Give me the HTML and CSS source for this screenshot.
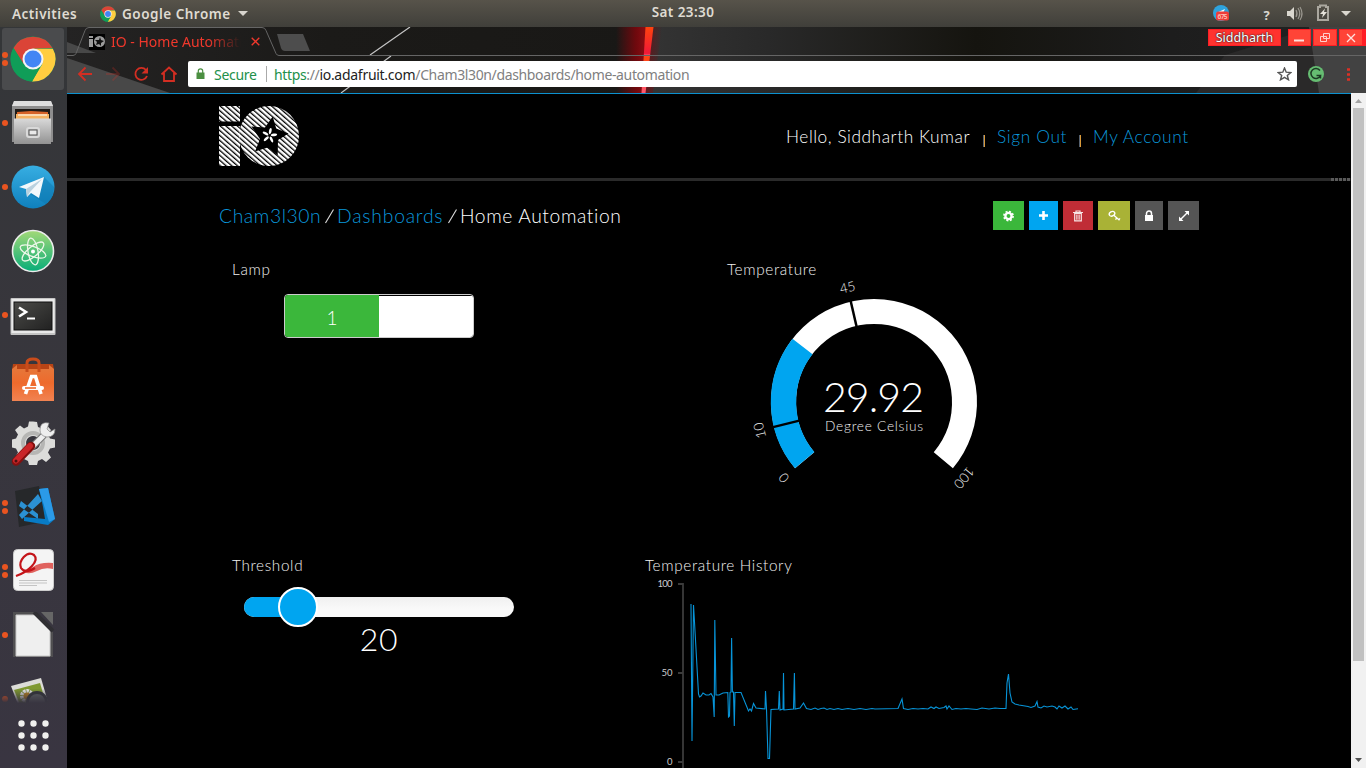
FILE: index.html
```html
<!DOCTYPE html>
<html lang="en">
<head>
<meta charset="utf-8">
<title>IO - Home Automation</title>
<link rel="stylesheet" href="styles.css">
</head>
<body>
<header class="topbar">
  <span class="activities">Activities</span>
  <svg class="mini" width="16" height="16" viewBox="0 0 46 46"><use href="#chrome"/></svg>
  <span class="appname">Google Chrome</span>
  <svg class="caret" width="10" height="5" viewBox="0 0 10 5"><path d="M0 0h10L5 5z" fill="#d8d5ce"/></svg>
  <span class="clock">Sat 23:30</span>
  <svg class="tray" width="150" height="27" viewBox="1210 0 150 27">
    <circle cx="1221" cy="13" r="8" fill="#2ea3dd"/><path d="M1216 13l9-4-2 4z" fill="#fff"/>
    <rect x="1216" y="11.500" width="13" height="9" rx="2" fill="#ef3c38"/>
    <text x="1217.500" y="18.500" font-size="6.500" textLength="10" fill="#ffc5bd">675</text>
    <text x="1263.500" y="19.500" font-size="13" font-weight="700" fill="#dad7cf">?</text>
    <path d="M1287 11h3l4-4v13l-4-4h-3z" fill="#dad7cf"/>
    <path d="M1296 10q2 3.500 0 7M1298 8q3.500 5.500 0 11M1300 7q4 6.500 0 13" fill="none" stroke="#9a978f" stroke-width="1.200"/>
    <path d="M1318 7h2v-1.500h6V7h2v13h-10z" fill="none" stroke="#aaa79f" stroke-width="2"/>
    <path d="M1325 8.500l-5 5.500h3l-1 4 5-6h-3z" fill="#e4e1d9"/>
    <path d="M1341 11h10l-5 5z" fill="#dad7cf"/>
  </svg>
</header>
<div class="desktop">
<nav class="dock">
  <div class="app on"><i class="dots two"></i>
    <svg width="46" height="46" viewBox="0 0 46 46"><g id="chrome"><circle cx="23" cy="23" r="22.500" fill="#109d58"/><path d="M3.500 12A22.500 22.500 0 0 1 42.500 12L23 12.700 13.500 28z" fill="#db4437"/><path d="M42.500 12A22.500 22.500 0 0 1 22 45.500L32.500 27 23 12.700h19.800z" fill="#ffcd40"/><path d="M3.500 12L13.500 28 23 33.500l9-5L22 45.500A22.500 22.500 0 0 1 3.500 12z" fill="#109d58"/><circle cx="23" cy="23" r="10.500" fill="#f4f4f4"/><circle cx="23" cy="23" r="8.500" fill="#4285f4"/></g></svg></div>
  <div class="app"><i class="dots"></i>
    <svg width="46" height="46" viewBox="0 0 46 46"><defs><linearGradient id="silver" x2="0" y2="1"><stop stop-color="#d9d9d9"/><stop offset="1" stop-color="#929292"/></linearGradient></defs><path d="M4 1h37l2 5v36H2V6z" fill="#8e8e8e"/><path d="M4 1h37l2 5H2z" fill="#dedede"/><path d="M5 9h35v12H5z" fill="#1f1b18"/><path d="M7 12l14-1 17 1v8H7z" fill="#d66329"/><path d="M6 14h33v6H6z" fill="#f5b262"/><path d="M8 15h29" stroke="#fff"/><path d="M4 18.500h37V44H4z" fill="url(#silver)"/><rect x="17" y="28" width="12" height="9" rx="2" fill="#bdbdbd" stroke="#d9d9d9" stroke-width="2"/><rect x="19" y="30" width="8" height="5" fill="#e9e9e9" stroke="#555"/></svg></div>
  <div class="app"><i class="dots"></i>
    <svg width="46" height="46" viewBox="0 0 46 46"><defs><linearGradient id="tele" x2="0" y2="1"><stop stop-color="#37aee2"/><stop offset="1" stop-color="#0f80bd"/></linearGradient></defs><circle cx="23" cy="23" r="21.500" fill="url(#tele)"/><path d="M34 13l10 10a21 21 0 0 1-8 17L20 30z" fill="#0c75ad" opacity=".45"/><path d="M9 23l25-10-5 21-8-5-4 4-1-8z" fill="#f3f8fb"/><path d="M16 25l16-10-12 13-3 5z" fill="#b9d1df"/></svg></div>
  <div class="app">
    <svg width="46" height="46" viewBox="0 0 46 46"><defs><linearGradient id="atom" x2="0" y2="1"><stop stop-color="#a3d978"/><stop offset="1" stop-color="#08ad78"/></linearGradient></defs><circle cx="23" cy="23" r="20.500" fill="url(#atom)" stroke="#ececec" stroke-width="1.600"/><g fill="none" stroke="#edf7e9" stroke-width="1.300"><ellipse cx="23" cy="23.500" rx="13.500" ry="5" transform="rotate(20 23 23.500)"/><ellipse cx="23" cy="23.500" rx="13.500" ry="5" transform="rotate(80 23 23.500)"/><ellipse cx="23" cy="23.500" rx="13.500" ry="5" transform="rotate(140 23 23.500)"/></g><circle cx="23" cy="23.500" r="2" fill="#fff"/></svg></div>
  <div class="app"><i class="dots"></i>
    <svg width="46" height="46" viewBox="0 0 46 46"><defs><linearGradient id="term" x2="1" y2="1"><stop stop-color="#4b4b48"/><stop offset="1" stop-color="#212121"/></linearGradient></defs><rect x=".5" y="6" width="45" height="37" rx="1" fill="#c4c4c4"/><rect x="1.500" y="7" width="43" height="34" fill="#e9e9e9"/><rect x="4" y="10" width="38" height="28" fill="url(#term)" stroke="#111"/><path d="M9 15.500l7 4.500-7 4.500" fill="none" stroke="#fff" stroke-width="2.600"/><path d="M17 26.500h8" stroke="#fff" stroke-width="2"/></svg></div>
  <div class="app">
    <svg width="46" height="46" viewBox="0 0 46 46"><defs><linearGradient id="bag" x2="0" y2="1"><stop stop-color="#e47a3d"/><stop offset=".5" stop-color="#ee6a2c"/><stop offset="1" stop-color="#f18352"/></linearGradient></defs><path d="M3 8h40l1 6H2z" fill="#b84415"/><path d="M2 13l5-4v4h32V9l5 4v32H2z" fill="url(#bag)"/><path d="M17 16V7q0-4 6-4t6 4v9" fill="none" stroke="#c94c1b" stroke-width="3"/><path d="M15.500 38l6-17.500h4L31 38" fill="none" stroke="#fff" stroke-width="3.600"/><path d="M14 32h18" stroke="#fff" stroke-width="4" stroke-linecap="round"/><path d="M15 32h11" stroke="#ef6c2e" stroke-width="1.600"/></svg></div>
  <div class="app">
    <svg width="46" height="46" viewBox="0 0 46 46"><path d="M23 1.500l4 .5 1 5 4 1.500 5-3 4 4.500-3 4.500 2 4 5 1v8l-5 1-2 4 3 5-5 4.500-4-3-4 2-1 4h-8l-1-4-4-2-4 3-5-4.500 3-5-2-4-4-1v-8l4-1 2-4-3-4.500 5-4.500 4 3 4-2 1-5zM23 16a7 7 0 1 0 .1 0z" fill="#dcdcda" fill-rule="evenodd"/><circle cx="23" cy="23" r="10" fill="none" stroke="#b6b6b4" stroke-width="4"/><path d="M21 28L34 15" stroke="#777" stroke-width="7"/><path d="M21 28L34 15" stroke="#eee" stroke-width="5"/><path d="M39 3q-9-2-9 7 0 6 7 7 8 0 8-8l-5 3-3-3z" fill="#eee" stroke="#888" stroke-width=".7"/><path d="M6 41.500L21 26" stroke="#83100f" stroke-width="8.500" stroke-linecap="round"/><path d="M6 40.500L20 26" stroke="#ca2629" stroke-width="6" stroke-linecap="round"/><circle cx="6" cy="41" r="1.500" fill="#4d1010"/></svg></div>
  <div class="app"><i class="dots two"></i>
    <svg width="46" height="46" viewBox="0 0 46 46"><path d="M5 7l24-5 8 35-28 6z" fill="#26282a"/><path d="M11 17l17 13v5L9 22zM28 10L9 31l3 4 20-18z" fill="#2b91d3"/><path d="M29 5l9-1 7 31-7 6-24-4v-4l21 2-2-12z" fill="#087bc5"/><path d="M29 5l9-1 7 31-6 3z" fill="#2b9ae7"/></svg></div>
  <div class="app"><i class="dots two"></i>
    <svg width="46" height="46" viewBox="0 0 46 46"><rect x="3.500" y="1.500" width="40" height="41" rx="4" fill="#f4f4f4" stroke="#ccc"/><path d="M6 28Q15 26 23 19 30 14 43 15v6q-9-2-16 2-8 4-13 1z" fill="#e0625e"/><path d="M6 28C18 24 30 13 24 7 17 2 8 13 11 20q4 6 14 0" fill="none" stroke="#c41419" stroke-width="2.200"/><path d="M9 32.500h28M9 35h28M9 37.500h18" stroke="#c4c4c4"/></svg></div>
  <div class="app"><i class="dots"></i>
    <svg width="46" height="46" viewBox="0 0 46 46"><path d="M3 0h21l19 20v25H3z" fill="#504f51"/><path d="M31 0h12v13z" fill="#666"/><path d="M6 3h19l15 15v26H6z" fill="#efefef" stroke="#c9c9c9"/><path d="M24 0l19 19" stroke="#302f33" stroke-width="4"/></svg></div>
  <div class="app cut"><i class="dots"></i>
    <svg width="46" height="46" viewBox="0 0 46 46"><path d="M1 10L31 2l7 24-28 8z" fill="#dcdcd7"/><path d="M4 14l26-7 5 17-24 7z" fill="#7f9930"/><circle cx="17" cy="20" r="5" fill="none" stroke="#eee" stroke-width="4" stroke-dasharray="2.500 .7"/><circle cx="17" cy="20" r="3.500" fill="#bd821f"/><circle cx="27" cy="26" r="9.500" fill="#5e6265" stroke="#303238" stroke-width="3"/></svg></div>
  <svg class="grid" width="31" height="31" viewBox="0 0 31 31"><path d="M3.500 3.500h24.100M3.500 15.500h24.100M3.500 27.500h24.100" stroke="#f0f0ee" stroke-width="6.400" stroke-linecap="round" stroke-dasharray="0 12"/></svg>
</nav>

<main class="browser">
  <div class="chrome">
    <svg class="theme" width="1299" height="66" viewBox="67 27 1299 66">
      <defs>
        <linearGradient id="bg"><stop stop-color="#242323"/><stop offset=".2" stop-color="#1b1a18"/><stop offset=".44" stop-color="#191816"/><stop offset=".445" stop-color="#343434"/><stop offset=".54" stop-color="#292929"/><stop offset=".7" stop-color="#15140f"/><stop offset=".85" stop-color="#1d1d1d"/><stop offset="1" stop-color="#222"/></linearGradient>
        <linearGradient id="glow"><stop stop-color="#7d060c" stop-opacity="0"/><stop offset=".65" stop-color="#7d060c" stop-opacity=".85"/><stop offset="1" stop-color="#8d0c12"/></linearGradient>
        <linearGradient id="glow2"><stop stop-color="#7d060c" stop-opacity=".7"/><stop offset="1" stop-color="#7d060c" stop-opacity="0"/></linearGradient>
        <linearGradient id="beam" x2="0" y2="1"><stop stop-color="#ff430e"/><stop offset=".4" stop-color="#f01938"/><stop offset=".43" stop-color="#ff5870"/><stop offset=".45" stop-color="#ff430e"/><stop offset="1" stop-color="#ff5870"/></linearGradient>
      </defs>
      <rect x="67" y="27" width="1299" height="66" fill="url(#bg)"/>
      <path d="M67 42l29 11H67zM67 58l103 35H67z" fill="#484848"/>
      <path d="M616 27h30l-3 66h-27z" fill="url(#glow)"/>
      <path d="M652 27h10l-9 66h-8z" fill="url(#glow2)"/>
      <path d="M645.500 27h8l-8 66h-4z" fill="url(#beam)"/>
      <path d="M410 27l-40 28M391 56l-50 37" stroke="#c4c4c4" stroke-width="1.200"/>
      <path d="M1225 55l90-28h51v66h-170z" fill="#2a2929"/>
      <path d="M1309 27h57v66h-47z" fill="#424242"/>
      <path d="M67 55.500h6q2 0 3-2l9-23q1-3 4-3h173q3 0 4 3l10 23q1 2 3 2h1087" fill="none" stroke="#656565"/>
      <path d="M277 34h26l7 17h-25q-3 0-4-3z" fill="#4d4d4d"/>
    </svg>
    <div class="tabs">
      <svg class="favicon" width="16" height="16" viewBox="0 0 16 16"><path fill="#000" d="M0 0h16v16H0z"/><path d="M0 2h4v2H0zM0 5h4v8H0z" fill="#9c9c9c"/><circle cx="10.500" cy="7.500" r="5.500" fill="#9c9c9c"/><path d="M11 3l1 3 3 1-3 2 0 3-2-2-3 1 1-3-2-2h4z" fill="#111"/></svg>
      <span class="tabtitle">IO - Home Automation</span>
      <svg class="close" width="9" height="9" viewBox="0 0 9 9"><path d="M.7.700l7.600 7.600M8.300.700L.7 8.300" stroke="#f0382c" stroke-width="1.300"/></svg>
      <div class="wincontrols">
        <span class="profile">Siddharth</span>
        <svg width="78" height="17" viewBox="0 0 78 17"><path d="M0 0h23v17H0zM25 0h24v17H25zM51 0h27v17H51z" fill="#ff1d25"/><path d="M1 1h21v15H1zM26 1h22v15H26zM52 1h22v15H52z" fill="#ff4437"/><path d="M6 11.500h10" stroke="#ffe0dd" stroke-width="2"/><path d="M35.500 4.500h6v5h-6zM32.500 7.500h6v5h-6z" fill="none" stroke="#ffd0cc"/><path d="M59 5l8 8M67 5l-8 8" stroke="#ffe0dd" stroke-width="1.300"/></svg>
      </div>
    </div>
    <div class="toolbar">
      <svg width="121" height="37" viewBox="67 56 121 37" fill="none" stroke="#d42e22" stroke-width="1.800"><path d="M92 74H79M85.500 67.500L79 74l6.500 6.500"/><path d="M106 74h13M112.500 67.500L119 74l-6.500 6.500" opacity=".25"/><path d="M146 70a6 6 0 1 0 1 6"/><path d="M148 67v6.500h-6.500z" fill="#d42e22" stroke="none"/><path d="M161.500 74.500l7.500-7 7.500 7M164 73v8h10v-8"/></svg>
      <div class="omnibox">
        <svg width="9" height="12" viewBox="0 0 9 12"><path d="M.5 4.500h8V11h-8z" fill="#4b8f41"/><path d="M2.300 5V3a2.200 2.200 0 0 1 4.400 0v2" fill="none" stroke="#4b8f41" stroke-width="1.200"/></svg>
        <span class="secure">Secure</span><span class="sep"></span>
        <span class="url"><b>https</b>://<em>io.adafruit.com</em>/Cham3l30n/dashboards/home-automation</span>
        <svg class="star" width="15" height="14" viewBox="0 0 15 14"><path d="M7.500 1l1.700 4.200 4.600.300-3.500 3 1.200 4.300-4-2.400-4 2.400L4.700 8.500l-3.500-3 4.600-.3z" fill="none" stroke="#555" stroke-width="1.400"/></svg>
      </div>
      <svg width="69" height="37" viewBox="1297 56 69 37"><circle cx="1316" cy="74" r="8" fill="#66bd72"/><path d="M1320 70.500a5 5 0 1 0 .5 5h-4M1320.500 75.500v3" fill="none" stroke="#1d3a24" stroke-width="1.500"/><path d="M1347 69.500h3M1347 74.500h3M1347 79.500h3" stroke="#dd3025" stroke-width="2.600"/></svg>
    </div>
  </div>

  <div class="viewport">
    <div class="page">
      <div class="site-header">
        <svg width="81" height="61" viewBox="219 106 81 61">
          <defs><pattern id="stripe" width="4" height="3.750" patternUnits="userSpaceOnUse" patternTransform="rotate(41)"><path fill="#fff" d="M0 0h4v2.450H0z"/></pattern></defs>
          <path d="M219 106h21v15.500h-21zM219 126h21v40h-21z" fill="url(#stripe)"/><circle cx="269" cy="136" r="30" fill="url(#stripe)"/>
          <path d="M272.700 116.500l3.500 12 12.300 5-10.500 6.500-.3 15.500-10-8-12.700 4 5-12.500-8.500-12.500 13.500 1z" fill="#000"/>
          <g fill="#fff"><ellipse id="petal" cx="269.500" cy="131" rx="1.300" ry="3.200" transform="rotate(10 269.500 135.500)"/><use href="#petal" transform="rotate(72 269.500 135.500)"/><use href="#petal" transform="rotate(144 269.500 135.500)"/><use href="#petal" transform="rotate(216 269.500 135.500)"/><use href="#petal" transform="rotate(288 269.500 135.500)"/></g>
        </svg>
        <div class="account"><span class="hello">Hello, Siddharth Kumar</span><i></i><a class="signout">Sign Out</a><i></i><a class="myacc">My Account</a></div>
      </div>
      <div class="rule"><span></span></div>
      <div class="crumbs">
        <div class="path"><a class="c1">Cham3l30n</a><svg class="slash" width="12" height="30" viewBox="0 0 12 30"><path d="M1.500 22L9.500 8.500" stroke="#ddd" stroke-width="1.100"/></svg><a class="c2">Dashboards</a><svg class="slash" width="12" height="30" viewBox="0 0 12 30"><path d="M1.500 22L9.500 8.500" stroke="#ddd" stroke-width="1.100"/></svg><span class="c3">Home Automation</span></div>
        <div class="actions">
          <span class="btn green"><svg width="12" height="12" viewBox="0 0 12 12"><circle cx="5.500" cy="6" r="3.100" fill="none" stroke="#fff" stroke-width="2.400"/><circle cx="5.500" cy="6" r="4.600" fill="none" stroke="#fff" stroke-width="1.600" stroke-dasharray="2 1.610"/></svg></span>
          <span class="btn blue"><svg width="12" height="12" viewBox="0 0 12 12"><path d="M5.500 1v9M1 5.500h9" stroke="#fff" stroke-width="2.600"/></svg></span>
          <span class="btn red"><svg width="12" height="12" viewBox="0 0 12 12"><path d="M1 2.500h10M4 2V1h4v1" fill="none" stroke="#f7e5e6" stroke-width="1.200"/><path d="M2.700 3.500h6.600v7.300H2.700zM4.900 4.500v5.300M7.100 4.500v5.300" fill="none" stroke="#f7e5e6" stroke-width="1.200"/></svg></span>
          <span class="btn olive"><svg width="13" height="12" viewBox="0 0 13 12"><ellipse cx="4" cy="3.800" rx="2.900" ry="2.200" transform="rotate(-30 4 3.800)" fill="none" stroke="#fff" stroke-width="1.400"/><path d="M5.800 5.300l5.700 5M8.800 8l-1.300 1.700M10.800 9.800l1.200-1.500" fill="none" stroke="#fff" stroke-width="1.300"/></svg></span>
          <span class="btn gray g1"><svg width="10" height="12" viewBox="0 0 10 12"><path d="M1 5h8v6H1z" fill="#fff"/><path d="M2.500 6V3.500a2.500 2.500 0 0 1 5 0V6" fill="none" stroke="#fff" stroke-width="1.500"/></svg></span>
          <span class="btn gray g2"><svg width="12" height="12" viewBox="0 0 12 12"><path d="M2 10l8-8" stroke="#fff" stroke-width="1.500"/><path d="M6.500 1H11v4.500zM1 6.500V11h4.500z" fill="#fff"/></svg></span>
        </div>
      </div>
      <div class="row first">
        <section class="lamp">
          <h2 class="t-lamp">Lamp</h2>
          <div class="toggle"><span>1</span><b></b></div>
        </section>
        <section class="temp">
          <h2 class="t-temp">Temperature</h2>
          <svg width="260" height="220" viewBox="727 279 260 220">
            <path d="M804.670 460.180A90.500 90.500 0 1 1 943.330 460.180" fill="none" stroke="#fff" stroke-width="25"/>
            <path d="M804.670 460.180A90.500 90.500 0 0 1 802.490 346.530" fill="none" stroke="#00a5f0" stroke-width="25.400"/>
            <path d="M-104 0h27" transform="translate(874 402) rotate(-14)" stroke="#000" stroke-width="2.500"/>
            <path d="M-104 0h27" transform="translate(874 402) rotate(77)" stroke="#000" stroke-width="2.500"/>
            <g class="ticks" text-anchor="middle">
              <text transform="translate(874 402) rotate(-130) translate(0 -113)">0</text>
              <text transform="translate(874 402) rotate(-104) translate(0 -113)">10</text>
              <text transform="translate(874 402) rotate(-13) translate(0 -113)">45</text>
              <text transform="translate(874 402) rotate(130) translate(0 -113)">100</text>
            </g>
            <text class="reading" x="823" y="412" textLength="101">29.92</text>
            <text class="unit" x="825" y="431" textLength="98">Degree Celsius</text>
          </svg>
        </section>
      </div>
      <div class="row second">
        <section class="threshold">
          <h2 class="t-thr">Threshold</h2>
          <div class="slider"><div class="fill"></div><div class="thumb"></div></div>
          <div class="value">20</div>
        </section>
        <section class="history">
          <h2 class="t-hist">Temperature History</h2>
          <svg width="450" height="190" viewBox="645 578 450 190">
            <path d="M678 584h5.500M678 673h5.500M678 762h5.500M683 583v185" fill="none" stroke="#3b3b3b" stroke-width="1.800"/>
            <g class="axis" text-anchor="end"><text x="672.500" y="587" textLength="15">100</text><text x="672.500" y="676">50</text><text x="672.500" y="765">0</text></g>
            <path class="line" d="M691 604L692 741 693.500 605 694.500 622 698.500 694 699.500 697 701 696 703 693 706 695 709 695 711 693.500 713 697 714.200 717 714.800 620 716 695 719 695 723 693 727.800 692.500 728.500 717 729.500 716 730 692.500 731 692 731.600 638 732.400 692 733.500 692 734.300 726 735 692.500 741 692.500 748.500 711 750 709 751.500 711 753.500 703.500 756 708 765 709 765.500 691 766.500 709 768 758.500 769.500 758.500 771 709.500 778.500 709 779.300 691 780 710 783 709 783.500 673 784 710 793.500 709 794.400 673 795 709 800 708 803.500 703 806.500 708.500 811 709.500 815 708 818 709.500 821 708.500 824 708 827 709.500 830 708.500 834 709.500 838 708.500 842 709.500 848 708.500 854 709.500 860 708.500 866 709.500 872 708.500 875 709 898 708.500 902 699 903.500 708.500 908 709.500 913 708.500 918 709 923 708.500 928 709 931 707 934 708.500 936 707 939 708.500 944 707.500 946 706 947 709 949 706 952 709.500 956 708.500 961 709 966 708.500 971 709 977 709.500 982 708 989 709 995 708 1000 708.500 1006 708.500 1007 683 1008.500 674 1010 693 1012 702 1015 704 1019 705 1028 706.500 1031 707.500 1035 706 1037 701.500 1038 707 1041 708 1044 706 1047 707 1052 706 1055 707 1057 709 1059 706 1062 708 1065 706 1068 709 1071 707 1073 709.500 1078 708.800"/>
          </svg>
        </section>
      </div>
    </div>
    <div class="scrollbar"><svg width="15" height="15" viewBox="0 0 15 15"><path d="M4 10h7L7.500 6z" fill="#a3a3a3"/></svg><div class="handle"></div><svg width="15" height="15" viewBox="0 0 15 15"><path d="M4 5h7L7.500 9z" fill="#505050"/></svg></div>
  </div>
</main>
</div>
</body>
</html>
```
FILE: styles.css
```css
* { box-sizing: border-box; }
body { margin: 0; width: 1366px; height: 768px; overflow: hidden; background: #000; font-family: "Noto Sans", sans-serif; }
svg { display: block; flex: none; }
.topbar { height: 27px; display: flex; align-items: center; background: linear-gradient(#57534a, #403f3a); color: #dfdbd2; font-size: 13.5px; font-weight: 600; position: relative; padding-left: 12px; white-space: nowrap; }
.activities { width: 68px; letter-spacing: .5px; }
.mini { margin: 0 6px 0 20px; }
.appname { width: 111px; letter-spacing: .5px; }
.caret { margin-left: 5px; }
.clock { position: absolute; left: 0; right: 0; text-align: center; letter-spacing: .4px; top: 3px; }
.tray { margin-left: auto; margin-right: 6px; }
.desktop { display: flex; height: 741px; }
.dock { width: 67px; flex: none; background: linear-gradient(#343638, #37363c 40%, #393541); overflow: hidden; }
.app { height: 64px; width: 66px; display: flex; align-items: center; justify-content: center; position: relative; }
.app.on::before { content: ""; position: absolute; left: 2px; top: 1px; width: 62px; height: 62px; border-radius: 3px; background: #4a4b4d; }
.app svg { position: relative; }
.dots { position: absolute; left: 2px; top: 29px; width: 6px; height: 6px; border-radius: 50%; background: #e95420; }
.dots.two { top: 25px; box-shadow: 0 8px #e95420; }
.app.cut { height: 36px; overflow: hidden; align-items: flex-start; -webkit-mask-image: linear-gradient(#000 60%, transparent); mask-image: linear-gradient(#000 60%, transparent); }
.app.cut .dots { top: 29px; }
.app.cut svg { margin-top: 9px; }
.grid { margin: 17px 0 0 17.500px; }
.browser { flex: 1; min-width: 0; display: flex; flex-direction: column; }
.chrome { height: 66px; position: relative; flex: none; }
.theme { position: absolute; left: 0; top: 0; }
.tabs { position: relative; height: 29px; display: flex; align-items: center; padding-left: 22px; }
.tabtitle { margin-left: 6px; width: 130px; overflow: hidden; white-space: nowrap; color: #f0382c; font-size: 14px; -webkit-mask-image: linear-gradient(90deg, #000 75%, transparent); mask-image: linear-gradient(90deg, #000 75%, transparent); }
.close { margin-left: 10px; }
.wincontrols { margin-left: auto; display: flex; gap: 7px; align-self: flex-start; margin-top: 2px; }
.profile { width: 73px; height: 17px; background: #ff332f; border: 1px solid #ff1d25; text-align: center; color: #fff; font-size: 12.5px; line-height: 16px; text-shadow: 0 0 2px #222, 0 0 1px #222; }
.toolbar { position: relative; display: flex; height: 37px; align-items: center; }
.omnibox { width: 1109px; height: 26px; margin-top: -1px; background: #fff; border-radius: 2px; display: flex; align-items: center; padding-left: 8px; font-size: 14px; color: #808080; white-space: nowrap; }
.secure { margin-left: 9px; width: 43px; color: #22904a; letter-spacing: -.3px; }
.sep { width: 1px; height: 16px; background: #aaa; margin: 0 7px 0 9px; }
.url { letter-spacing: -.36px; }
.url b { font-weight: 400; color: #22904a; }
.url em { font-style: normal; color: #222; letter-spacing: -.28px; }
.star { margin-left: auto; margin-right: 5px; }
.viewport { flex: 1; display: flex; min-height: 0; }
.page { flex: 1; border-top: 1px solid #0c91cf; background: #000; color: #fff; font-family: Lato, sans-serif; font-weight: 300; overflow: hidden; }
.scrollbar { width: 15px; background: #f1f1f1; display: flex; flex-direction: column; justify-content: space-between; }
.handle { width: 11px; height: 553px; margin: 0 2px auto; background: #c1c1c1; }
.site-header { height: 84px; padding: 12px 163px 0 152px; display: flex; justify-content: space-between; }
.page a { color: #0a98dc; }
.account { display: flex; font-size: 17.3px; line-height: 24px; padding-top: 19px; margin-right: -2px; white-space: nowrap; }
.account i { width: 2px; height: 12px; background: linear-gradient(90deg, #55606e 50%, #d99a3a 50%); margin: 10px 12px 0 11px; }
.hello { width: 186px; letter-spacing: .55px; }
.signout { width: 71px; letter-spacing: .65px; }
.myacc { width: 97px; letter-spacing: .65px; }
.rule { height: 3px; background: #2a2a2a; display: flex; justify-content: flex-end; }
.rule span { width: 20px; background: repeating-linear-gradient(90deg, #5a5a5a 0 3px, #111 3px 4px); }
.crumbs { display: flex; justify-content: space-between; padding: 20px 152px 0; height: 78px; }
.path { display: flex; font-size: 19.3px; line-height: 30px; letter-spacing: .6px; white-space: nowrap; }
.c1 { width: 105px; } .c2 { width: 110px; letter-spacing: .8px; }
.slash { margin-right: 1px; }
.actions { display: flex; gap: 5px; }
.btn { height: 29px; display: flex; align-items: center; justify-content: center; }
.green { width: 31px; background: #3bb73b; } .blue { width: 29px; background: #00a5f0; } .red { width: 30px; background: #c02d36; }
.olive { width: 32px; background: #a9b236; } .gray { background: #555; } .g1 { width: 28px; } .g2 { width: 31px; }
.row { display: flex; }
.row h2 { margin: 0; font-size: 15.3px; font-weight: 300; line-height: 20px; letter-spacing: .65px; color: #f2f2f2; white-space: nowrap; }
.first { height: 296px; padding-left: 165px; }
.lamp { width: 495px; }
.toggle { margin: 15px 0 0 52px; width: 190px; height: 44px; border: 1px solid #ccc; border-radius: 4px; display: flex; overflow: hidden; background: #000; }
.toggle span { width: 94px; background: #3bb73b; text-align: center; line-height: 45px; font-size: 19px; }
.toggle b { flex: 1; background: #fff; margin-top: 1px; }
.temp svg { overflow: visible; }
.ticks { font-size: 13.500px; fill: #f0f0f0; }
.reading { font-size: 41px; fill: #fff; }
.unit { font-size: 13.700px; fill: #f0f0f0; }
.second { padding-left: 165px; }
.threshold { width: 413px; }
.slider { margin: 22px 0 0 12px; width: 270px; height: 20px; border-radius: 10px; background: linear-gradient(#f0f0f0, #f9f9f9 60%); position: relative; }
.fill { width: 54px; height: 20px; border-radius: 10px 0 0 10px; background: #00a5f0; }
.thumb { position: absolute; left: 34px; top: -10px; width: 40px; height: 40px; border-radius: 50%; background: #00a5f0; border: 2px solid #fff; }
.value { width: 270px; margin: 2px 0 0 12px; text-align: center; font-size: 32px; line-height: 40px; letter-spacing: .8px; }
.history svg { margin-top: 3px; }
.axis { font-size: 9.500px; fill: #ccc; font-weight: 400; }
.line { fill: none; stroke: #0794d8; stroke-width: 1.1; }
```
